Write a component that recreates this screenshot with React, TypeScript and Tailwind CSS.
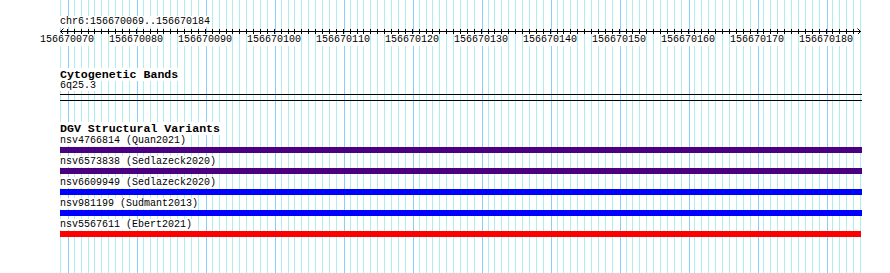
// Vue statique d'une region genomique : regle, bandes cytogenetiques, variants DGV
const START = 156670069;
const PX = 800 / 116; // pixels par base
const LEFT = 60;

const bases = Array.from({ length: 117 }, (_, k) => k);
const isMajor = (k: number) => (k - 1) % 10 === 0;
const baseX = (k: number) => Math.round(LEFT + PX * k);

const variants = [
  { id: "nsv4766814", study: "Quan2021", color: "bg-[#4b0082]", w: "w-[802px]" },
  { id: "nsv6573838", study: "Sedlazeck2020", color: "bg-[#4b0082]", w: "w-[802px]" },
  { id: "nsv6609949", study: "Sedlazeck2020", color: "bg-[#0000ff]", w: "w-[802px]" },
  { id: "nsv981199", study: "Sudmant2013", color: "bg-[#0000ff]", w: "w-[802px]" },
  { id: "nsv5567611", study: "Ebert2021", color: "bg-[#ff0000]", w: "w-[801px]" },
];

function Grid() {
  return (
    <svg className="absolute inset-0" width={890} height={273} shapeRendering="crispEdges">
      {bases.map((k) => {
        const x = isMajor(k) ? baseX(k) + 1 : baseX(k);
        return (
          <line
            key={k}
            x1={x + 0.5}
            x2={x + 0.5}
            y1={0}
            y2={273}
            stroke={isMajor(k) ? "#87cefa" : "#afeeee"}
            strokeWidth={1}
          />
        );
      })}
    </svg>
  );
}

function Ruler() {
  return (
    <div>
      <div className="h-[12px] leading-[12px]">
        <span className="bg-white">chr6:156670069..156670184</span>
      </div>
      <svg width={802} height={6} shapeRendering="crispEdges" className="block -ml-[60px] w-[862px]" viewBox="0 0 862 6">
        <line x1={60} x2={861} y1={3.5} y2={3.5} stroke="#000" />
        {bases.slice(1, 116).map((k) => (
          <line key={k} x1={baseX(k) + 0.5} x2={baseX(k) + 0.5} y1={1} y2={6} stroke="#000" />
        ))}
        <polyline points="63.5,0.5 60.5,3.5 63.5,6.5" fill="none" stroke="#000" shapeRendering="auto" />
        <polyline points="857.5,0.5 860.5,3.5 857.5,6.5" fill="none" stroke="#000" shapeRendering="auto" />
      </svg>
      <div className="relative h-[12px] leading-[12px] -ml-[60px]">
        {Array.from({ length: 12 }, (_, j) => {
          const k = 1 + j * 10;
          return (
            <span
              key={j}
              className="absolute top-0 -translate-x-1/2 bg-white"
              style={{ left: baseX(k) }}
            >
              {START + k}
            </span>
          );
        })}
      </div>
    </div>
  );
}

export default function App() {
  return (
    <div className="relative w-[890px] h-[273px] overflow-hidden bg-white text-black font-['Liberation_Mono','DejaVu_Sans_Mono',monospace] text-[10px]">
      <Grid />
      <div className="relative pl-[60px] pt-[16px]">
        <Ruler />

        {/* Bandes cytogenetiques */}
        <div className="mt-[23px]">
          <div className="h-[11px] leading-[11px] text-[11.6px] font-bold">
            <span className="bg-white">Cytogenetic Bands</span>
          </div>
          <div className="h-[12px] leading-[12px]">
            <span className="bg-white">6q25.3</span>
          </div>
          <div className="mt-[2px] w-[802px] h-[7px] border-y border-black"></div>
        </div>

        {/* Variants structuraux */}
        <div className="mt-[22px]">
          <div className="h-[11px] leading-[11px] text-[11.6px] font-bold">
            <span className="bg-white">DGV Structural Variants</span>
          </div>
          <div className="mt-[1px] flex flex-col gap-[3px]">
            {variants.map((v) => (
              <div key={v.id}>
                <div className="h-[12px] leading-[12px]">
                  <span className="bg-white">
                    {v.id} ({v.study})
                  </span>
                </div>
                <div className={`h-[6px] ${v.w} ${v.color}`}></div>
              </div>
            ))}
          </div>
        </div>
      </div>
    </div>
  );
}
